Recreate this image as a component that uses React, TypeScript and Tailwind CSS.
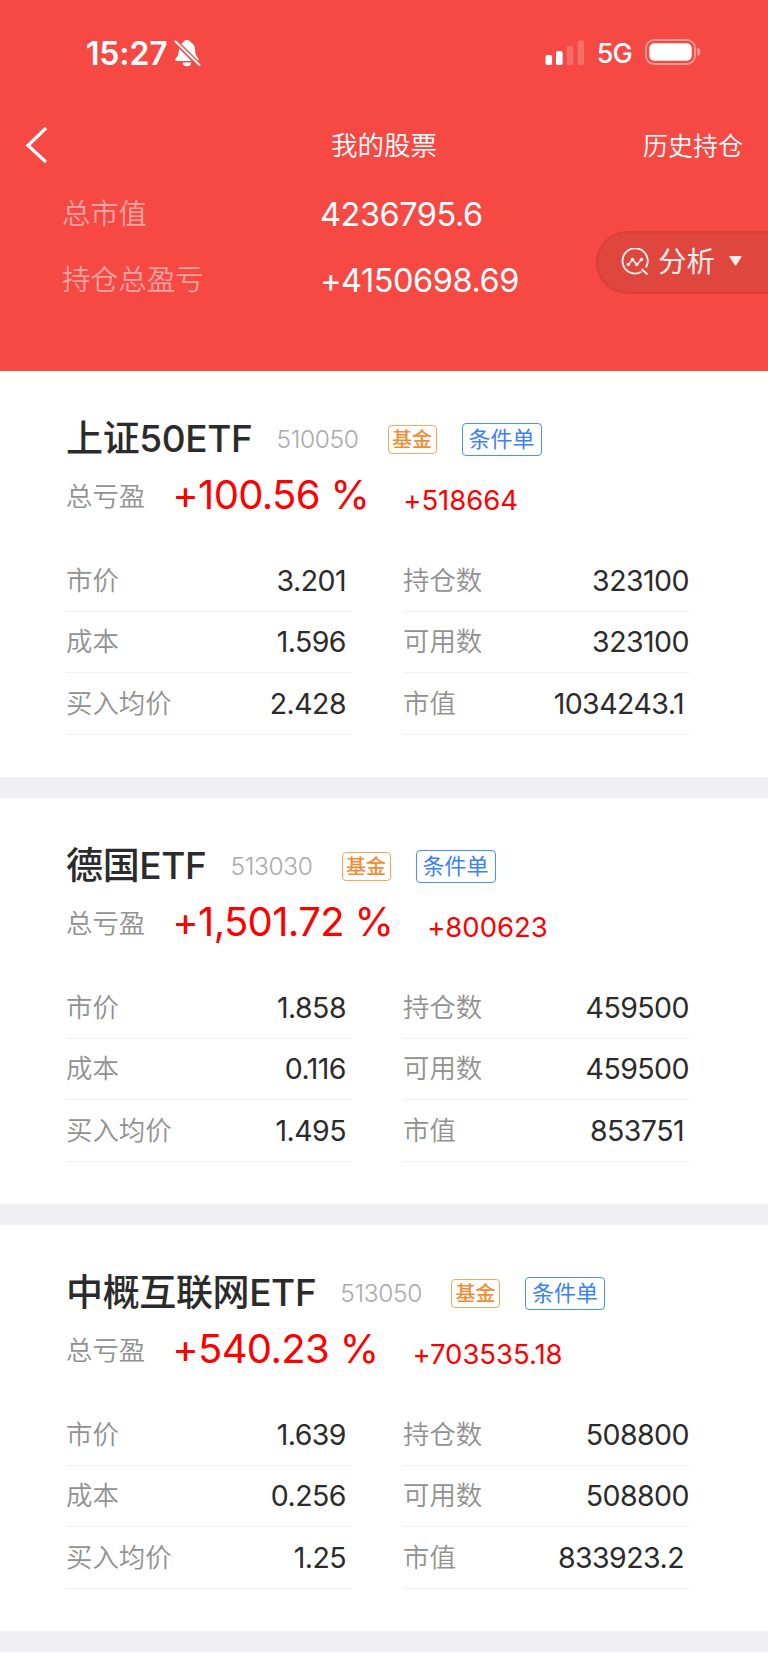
type Holding = {
  name: string;
  code: string;
  percent: string;
  profit: string;
  price: string;
  cost: string;
  avgPrice: string;
  amount: string;
  available: string;
  marketValue: string;
};

const holdings: Holding[] = [
  {
    name: "上证50ETF",
    code: "510050",
    percent: "+100.56 %",
    profit: "+518664",
    price: "3.201",
    cost: "1.596",
    avgPrice: "2.428",
    amount: "323100",
    available: "323100",
    marketValue: "1034243.1",
  },
  {
    name: "德国ETF",
    code: "513030",
    percent: "+1,501.72 %",
    profit: "+800623",
    price: "1.858",
    cost: "0.116",
    avgPrice: "1.495",
    amount: "459500",
    available: "459500",
    marketValue: "853751",
  },
  {
    name: "中概互联网ETF",
    code: "513050",
    percent: "+540.23 %",
    profit: "+703535.18",
    price: "1.639",
    cost: "0.256",
    avgPrice: "1.25",
    amount: "508800",
    available: "508800",
    marketValue: "833923.2",
  },
];

function StatusBar() {
  return (
    <div className="flex h-[109px] items-start justify-between pt-[33px] pr-[67px] pl-[86px]">
      <div className="flex h-10 items-center gap-[7px]">
        <span className="pt-px text-[32px] leading-10 font-semibold tracking-[-0.005em]">15:27</span>
        <svg width="27" height="28" viewBox="0 0 27 28" fill="none">
          <path
            d="M13 1c-2 0-3.400 1-3.900 2.400C6.200 4.600 5 7.500 4.900 11c-.1 4-.9 5.800-2.700 7.700-1.400 1.500-1.300 3.300.8 3.300h20c2.100 0 2.200-1.800.8-3.300-1.800-1.900-2.600-3.700-2.700-7.700-.1-3.500-1.300-6.400-4.200-7.600C16.400 2 15 1 13 1Z"
            fill="white"
          />
          <path d="M8.800 23.500h8.400a4.200 3.800 0 0 1-8.400 0Z" fill="white" />
          <path d="M0 1 26 27" stroke="#f64944" strokeWidth="5" />
          <path d="M1.500 2.500 25.500 26" stroke="white" strokeWidth="2" strokeLinecap="round" />
        </svg>
      </div>
      <div className="flex h-10 items-center">
        <svg width="40" height="26" viewBox="0 0 40 26" fill="white">
          <rect x="0.500" y="15" width="6.600" height="10" rx="1.800" />
          <rect x="11" y="11" width="6.600" height="14" rx="1.800" />
          <rect x="21.800" y="6" width="6.400" height="19" rx="1.800" opacity="0.2" />
          <rect x="32.600" y="0.500" width="6.400" height="24.500" rx="1.800" opacity="0.2" />
        </svg>
        <span className="ml-3 pt-px text-[27px] leading-10 font-medium tracking-[-0.03em]">5G</span>
        <svg className="ml-[13px]" width="56" height="28" viewBox="0 0 56 28" fill="none">
          <rect x="1" y="1" width="49" height="24" rx="8" stroke="white" strokeOpacity="0.45" strokeWidth="1.800" />
          <rect x="4.300" y="4.300" width="42.400" height="17.400" rx="5" fill="white" />
          <path d="M52.300 9c2 .5 3 2.200 3 4s-1 3.500-3 4Z" fill="white" fillOpacity="0.5" />
        </svg>
      </div>
    </div>
  );
}

function NavBar() {
  return (
    <div className="grid h-[72px] grid-cols-3 items-center pr-[25px] pl-[25px]">
      <svg width="24" height="38" viewBox="0 0 24 38" fill="none">
        <path d="M21 2 3 19.500 21 36" stroke="white" strokeWidth="3.200" />
      </svg>
      <h1 className="pt-[2px] text-center text-[26.500px] font-[350]">我的股票</h1>
      <span className="pt-[3px] text-right text-[25px] font-[350]">历史持仓</span>
    </div>
  );
}

function AnalysisButton() {
  return (
    <button className="absolute top-[231px] right-0 flex h-[63px] w-[172px] items-center rounded-l-full border-2 border-r-0 border-[#d93f3b] bg-[#de463e] pl-[23px] text-white/90">
      <svg className="-mt-0.5" width="28" height="28" viewBox="0 0 28 28" fill="none" stroke="currentColor" strokeWidth="1.900">
        <path d="M20.500 23.800A12.600 12.600 0 1 1 24.800 19.600M20.500 21l6 5.500" />
        <path d="M7.500 16.500 11.500 11.500 15.800 16.500 20.500 11.500" strokeWidth="1.600" />
        <g fill="currentColor" stroke="none">
          <circle cx="7.300" cy="16.500" r="1.800" />
          <circle cx="11.500" cy="11.500" r="1.800" />
          <circle cx="15.800" cy="16.500" r="1.800" />
          <circle cx="20.500" cy="11.500" r="1.800" />
        </g>
      </svg>
      <span className="-mt-0.5 ml-[9px] text-[28.500px] leading-10">分析</span>
      <svg className="-mt-1 ml-[14px]" width="13" height="10" viewBox="0 0 13 10" fill="currentColor">
        <path d="M1 0h11q1 0 .5 1L7.200 9.200q-.7.800-1.400 0L.5 1Q0 0 1 0Z" />
      </svg>
    </button>
  );
}

function SummaryRow({ label, value }: { label: string; value: string }) {
  return (
    <div className="flex h-[66px] items-center">
      <span className="w-[258px] text-[28.300px] font-[350] text-white/50">{label}</span>
      <span className="pt-[3px] text-[32.500px] tracking-[-0.014em]">{value}</span>
    </div>
  );
}

function DetailRow({ label, value, pad }: { label: string; value: string; pad?: string }) {
  return (
    <div className="flex h-[61.200px] items-center justify-between border-b border-[#f0f0f2]">
      <span className="text-[26.400px] font-[350] text-[#919191]">{label}</span>
      <span className={`pt-px text-[28.500px] tracking-[-0.019em] text-[#2b2b2b] ${pad ?? ""}`}>{value}</span>
    </div>
  );
}

function HoldingCard({ item }: { item: Holding }) {
  return (
    <section className="h-[427px] border-b-[21px] border-[#efeff4] bg-white pt-[46px] pl-[66px]">
      <div className="flex h-11 items-center">
        <h2 className="text-[37px] leading-[44px] font-medium tracking-[-0.010em] text-[#2b2b2b]">{item.name}</h2>
        <span className="ml-[24px] pt-px text-[24.500px] font-light tracking-[-0.014em] text-[#aaaaaa]">{item.code}</span>
        <span className="ml-[29px] flex h-[29px] w-[49px] items-center justify-center rounded border border-[#f7a65c] pt-px text-[20px] font-medium text-[#f08c34]">
          基金
        </span>
        <span className="ml-[25px] flex h-[33px] w-[80px] items-center justify-center rounded border-[1.500px] border-[#4d8dff] text-[22px] text-[#3c80fa]">
          条件单
        </span>
      </div>
      <div className="flex h-[60px] items-center pt-[10px]">
        <span className="pt-px text-[26.400px] font-[350] text-[#919191]">总亏盈</span>
        <span className="ml-[27px] -mt-0.5 text-[40px] tracking-[-0.016em] text-[#ff0000]">{item.percent}</span>
        <span className="ml-[34px] pt-[9px] text-[27.500px] tracking-[-0.001em] text-[#ff0000]">{item.profit}</span>
      </div>
      <div className="mt-[30px] grid grid-cols-[286px_286px] gap-x-[51px]">
        <div>
          <DetailRow label="市价" value={item.price} pad="pr-[6px]" />
          <DetailRow label="成本" value={item.cost} pad="pr-[6px]" />
          <DetailRow label="买入均价" value={item.avgPrice} pad="pr-[6px]" />
        </div>
        <div>
          <DetailRow label="持仓数" value={item.amount} />
          <DetailRow label="可用数" value={item.available} />
          <DetailRow label="市值" value={item.marketValue} pad="pr-[5px]" />
        </div>
      </div>
    </section>
  );
}

export default function App() {
  return (
    <main className="h-[1665px] w-[768px] overflow-hidden bg-white font-['Inter','Noto_Sans_CJK_SC',sans-serif] whitespace-nowrap">
      <header className="relative h-[371px] bg-[#f64944] text-white">
        <StatusBar />
        <NavBar />
        <div className="pl-[62px]">
          <SummaryRow label="总市值" value="4236795.6" />
          <SummaryRow label="持仓总盈亏" value="+4150698.69" />
        </div>
        <AnalysisButton />
      </header>
      {holdings.map((item) => (
        <HoldingCard key={item.code} item={item} />
      ))}
    </main>
  );
}
